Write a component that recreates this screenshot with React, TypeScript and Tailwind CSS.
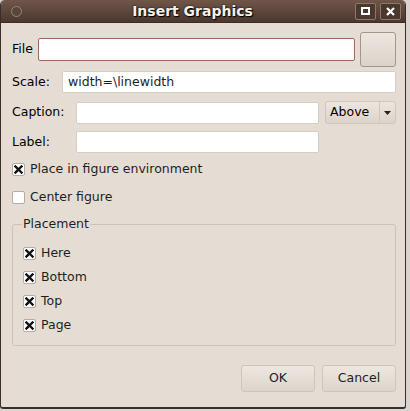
import React from 'react';

function CheckMark() {
  return (
    <svg width="9" height="9" viewBox="0 0 9 9">
      <path d="M1.5 1.5 L7.5 7.5 M7.5 1.5 L1.5 7.5" stroke="#111" strokeWidth="2.4" strokeLinecap="square" />
    </svg>
  );
}

function Check({ label, checked }: { label: string; checked: boolean }) {
  return (
    <div className="flex items-center h-[16px]">
      <span className="w-[13px] h-[13px] bg-white border border-[#b5ada3] rounded-[2px] flex items-center justify-center">
        {checked && <CheckMark />}
      </span>
      <span className="ml-[5px] text-[#1e1e1e]">{label}</span>
    </div>
  );
}

function Field({ className = '', value = '' }: { className?: string; value?: string }) {
  return (
    <div
      className={`h-[22px] bg-white border border-[#d6cec4] rounded-[2px] flex items-center px-[5px] text-[#1e1e1e] ${className}`}
    >
      {value}
    </div>
  );
}

function Button({ label, className = '' }: { label: string; className?: string }) {
  return (
    <div
      className={`h-[27px] rounded-[3px] border border-[#cfc6bb] bg-gradient-to-b from-[#ede7e0] to-[#ddd5cb] flex items-center justify-center text-[#1e1e1e] ${className}`}
    >
      {label}
    </div>
  );
}

export default function App() {
  return (
    <div className="w-[410px] h-[411px] bg-[#d9d4cf] overflow-hidden" style={{ fontFamily: '"DejaVu Sans", sans-serif' }}>
      <div className="w-[406px] h-[409px] flex flex-col rounded-t-[5px] overflow-hidden bg-[#e5ddd4] border-l border-r border-b-2 border-[#3a2e28] rounded-b-[3px] text-[12.5px]">
        {/* title bar */}
        <div className="h-[23px] shrink-0 bg-gradient-to-b from-[#705649] to-[#4b382e] flex items-center relative border-b border-[#3b2c24]">
          <span className="ml-[10px] w-[11px] h-[11px] rounded-full border border-[#9a8477] bg-[#5a463b]" />
          <span
            className="flex-1 text-center font-bold text-[14px] text-[#f4f0ea] ml-[8px]"
            style={{ textShadow: '0 0 2px #000, 1px 1px 1px #000' }}
          >
            Insert Graphics
          </span>
          <div className="flex gap-[4px] mr-[4px]">
            <span className="w-[21px] h-[17px] border border-[#8f7769] rounded-[2px] bg-[#4a372d] flex items-center justify-center">
              <span className="w-[9px] h-[8px] border-[2px] border-white" />
            </span>
            <span className="w-[21px] h-[17px] border border-[#8f7769] rounded-[2px] bg-[#4a372d] flex items-center justify-center">
              <svg width="9" height="9" viewBox="0 0 9 9">
                <path d="M1 1 L8 8 M8 1 L1 8" stroke="#fff" strokeWidth="2.2" />
              </svg>
            </span>
          </div>
        </div>

        <div className="pl-[11px] pr-[9px] flex flex-col">
          {/* File */}
          <div className="flex items-center mt-[9px] h-[35px]">
            <span className="w-[26px]">File</span>
            <div className="flex-1 h-[23px] bg-white border border-[#9a6c57] rounded-[2px]" />
            <div className="w-[36px] h-[35px] ml-[5px] rounded-[3px] border border-[#a0978d] bg-gradient-to-b from-[#ede7e0] to-[#dbd3c9]" />
          </div>

          <div className="flex items-center mt-[4px]">
            <span className="w-[50px]">Scale:</span>
            <Field className="flex-1" value="width=\linewidth" />
          </div>

          <div className="flex items-center mt-[8px]">
            <span className="w-[64px]">Caption:</span>
            <Field className="w-[243px]" />
            <div className="ml-[6px] flex-1 h-[23px] rounded-[3px] border border-[#d0c7bc] bg-gradient-to-b from-[#ece6df] to-[#dcd4ca] flex items-center">
              <span className="flex-1 pl-[4px]">Above</span>
              <span className="w-px h-full bg-[#d0c7bc]" />
              <span className="w-[15px] flex justify-center">
                <svg width="7" height="4" viewBox="0 0 7 4">
                  <path d="M0 0 L7 0 L3.5 4 Z" fill="#222" />
                </svg>
              </span>
            </div>
          </div>

          <div className="flex items-center mt-[7px]">
            <span className="w-[64px]">Label:</span>
            <Field className="w-[243px]" />
          </div>

          <div className="mt-[8px]">
            <Check label="Place in figure environment" checked />
          </div>
          <div className="mt-[12px]">
            <Check label="Center figure" checked={false} />
          </div>

          <fieldset className="mt-[10px] border border-[#cbc2b8] rounded-[3px] pl-[10px] pb-[14px] h-[131px]">
            <legend className="ml-[-1px] px-[1px] text-[#1e1e1e]">Placement</legend>
            <div className="flex flex-col gap-[8px] mt-[12px]">
              <Check label="Here" checked />
              <Check label="Bottom" checked />
              <Check label="Top" checked />
              <Check label="Page" checked />
            </div>
          </fieldset>

          <div className="flex justify-end gap-[7px] mt-[19px]">
            <Button label="OK" className="w-[74px]" />
            <Button label="Cancel" className="w-[74px]" />
          </div>
        </div>
      </div>
    </div>
  );
}
